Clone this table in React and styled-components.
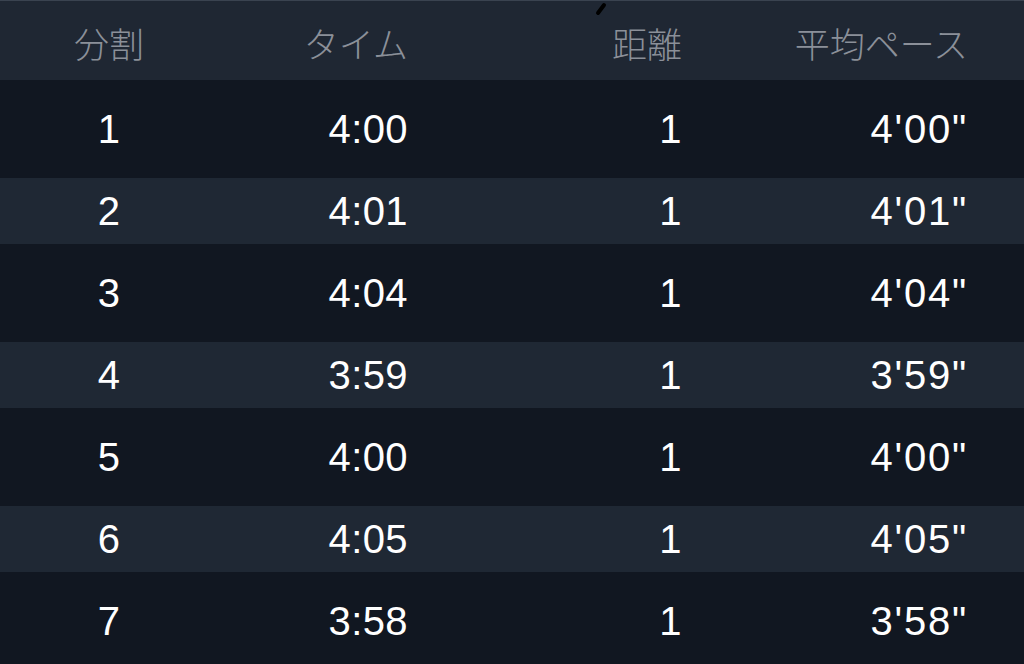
import styled, { createGlobalStyle } from "styled-components";

const Global = createGlobalStyle`
  html, body {
    margin: 0;
    padding: 0;
    background: #111721;
    overflow: hidden;
  }
  body {
    font-family: "Liberation Sans", Arial, "Noto Sans CJK JP", sans-serif;
  }
`;

const Table = styled.div`
  position: relative;
  width: 1024px;
  height: 664px;
  overflow: hidden;
  background: #111721;
`;

const Row = styled.div`
  display: grid;
  grid-template-columns: 218px 190px 274px 286px;
  padding-right: 56px;
  align-items: center;
  height: ${(props) => (props.$alt ? "66px" : "98px")};
  background: ${(props) => (props.$alt ? "#1f2834" : "#111721")};
  color: #fff;
  font-size: 40px;
  letter-spacing: 0.4px;
`;

const HeaderRow = styled(Row)`
  height: 80px;
  border-top: 1px solid #3a4350;
  background: #1f2733;
  color: #8b9099;
  font-family: "Noto Sans CJK JP", sans-serif;
  font-weight: 300;
  font-size: 35px;
  letter-spacing: 0;
  padding-top: 4px;
  box-sizing: border-box;
`;

const Cell = styled.div`
  text-align: ${(props) => props.$align || "right"};
  letter-spacing: ${(props) => (props.$wide ? "1.8px" : "inherit")};
`;

const Mark = styled.svg`
  position: absolute;
  left: 594px;
  top: 0;
`;

const splits = [
  { n: 1, time: "4:00", dist: 1, pace: "4'00\"" },
  { n: 2, time: "4:01", dist: 1, pace: "4'01\"" },
  { n: 3, time: "4:04", dist: 1, pace: "4'04\"" },
  { n: 4, time: "3:59", dist: 1, pace: "3'59\"" },
  { n: 5, time: "4:00", dist: 1, pace: "4'00\"" },
  { n: 6, time: "4:05", dist: 1, pace: "4'05\"" },
  { n: 7, time: "3:58", dist: 1, pace: "3'58\"" },
];

export default function App() {
  return (
    <>
      <Global />
      <Table>
        <HeaderRow>
          <Cell $align="center">分割</Cell>
          <Cell>タイム</Cell>
          <Cell>距離</Cell>
          <Cell>平均ペース</Cell>
        </HeaderRow>
        {splits.map((s, index) => (
          <Row key={s.n} $alt={index % 2 === 1}>
            <Cell $align="center">{s.n}</Cell>
            <Cell>{s.time}</Cell>
            <Cell>{s.dist}</Cell>
            <Cell $wide>{s.pace}</Cell>
          </Row>
        ))}
        <Mark width="16" height="18" viewBox="0 0 16 18">
          <path d="M4 13 L10 5" stroke="#000" strokeWidth="4" strokeLinecap="round" />
        </Mark>
      </Table>
    </>
  );
}
